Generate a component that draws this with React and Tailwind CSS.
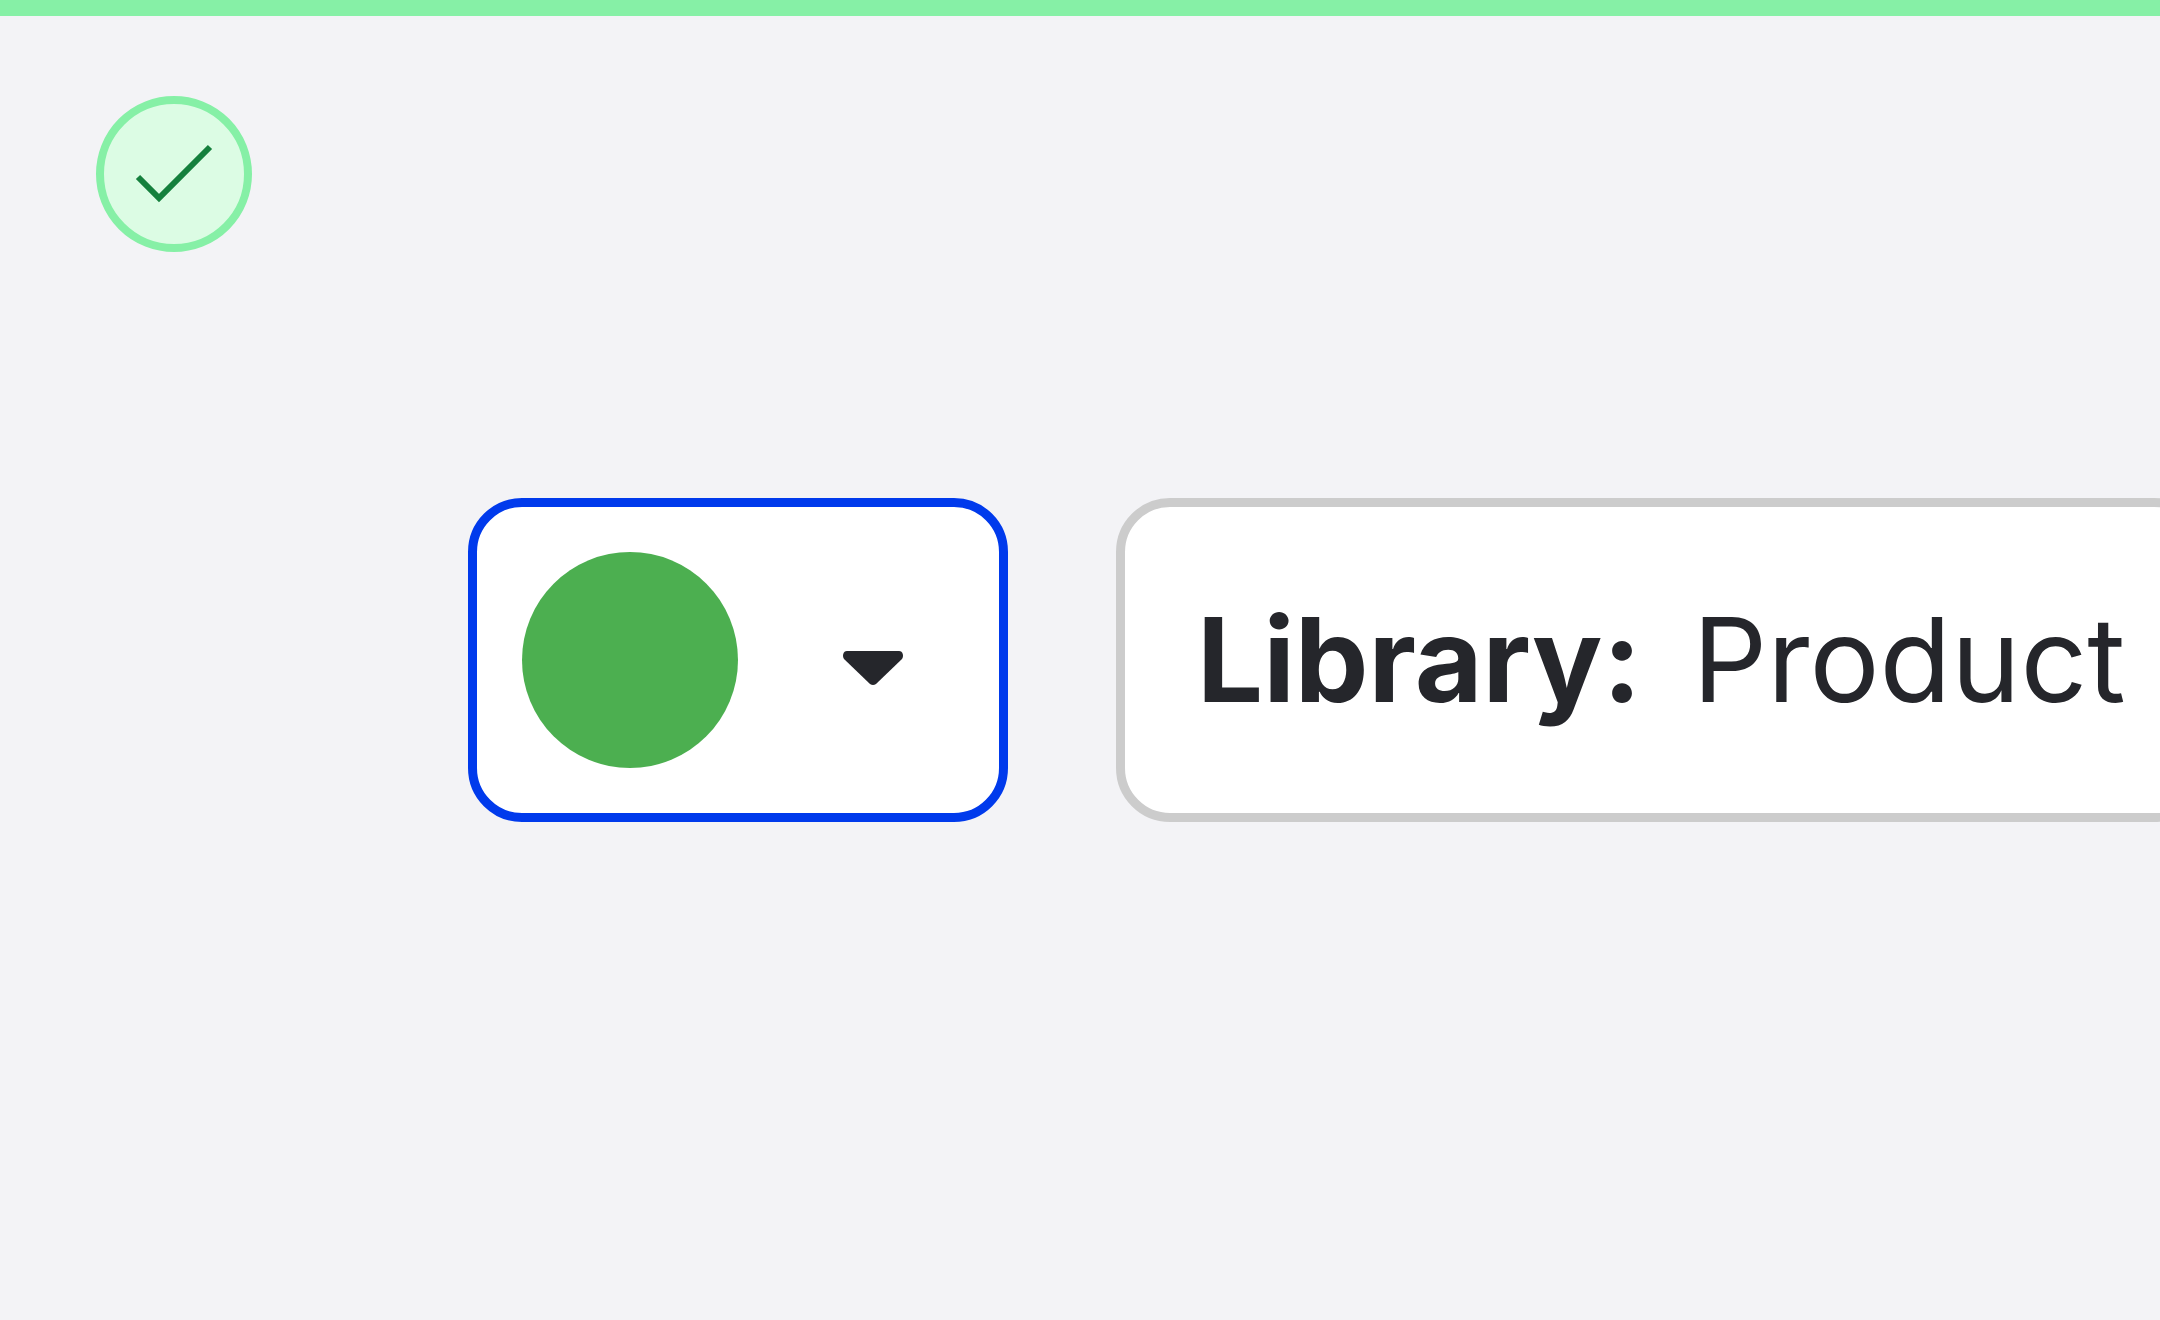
export default function App() {
  return (
    <div className="min-h-screen border-t-16 border-[#86f0a6] bg-[#f3f3f6] px-24 pt-20 font-['Inter',sans-serif] text-[#25262b]">
      <div className="flex size-[156px] items-center justify-center rounded-full border-8 border-[#86f0a6] bg-[#dcfce4]">
        <svg className="size-full" viewBox="0 0 140 140" fill="none" stroke="#15803d" strokeWidth="6">
          <path d="M34 73 L55 94 L106 43" />
        </svg>
      </div>
      <div className="mt-[246px] -mr-24 ml-[372px] flex gap-[108px] overflow-hidden">
        <button
          aria-label="Choose colour"
          className="flex h-[324px] w-[540px] shrink-0 items-center rounded-[54px] border-9 border-[#003aec] bg-white pl-[45px]"
        >
          <span className="size-[216px] rounded-full bg-[#4caf50]" />
          <svg className="ml-[81px] size-[108px]" viewBox="0 0 108 108" fill="currentColor">
            <path d="M28 45H80C84 45 85 50 83 53L57 78Q54 80 51 78L25 53C23 50 24 45 28 45Z" />
          </svg>
        </button>
        <button className="-mr-12 flex h-[324px] grow items-center rounded-[54px] border-9 border-[#ccc] bg-white pl-[72px] text-[117px] leading-[162px] whitespace-nowrap">
          <strong className="font-bold">Library:</strong>
          <span className="ml-[51px]">Product</span>
        </button>
      </div>
    </div>
  );
}
